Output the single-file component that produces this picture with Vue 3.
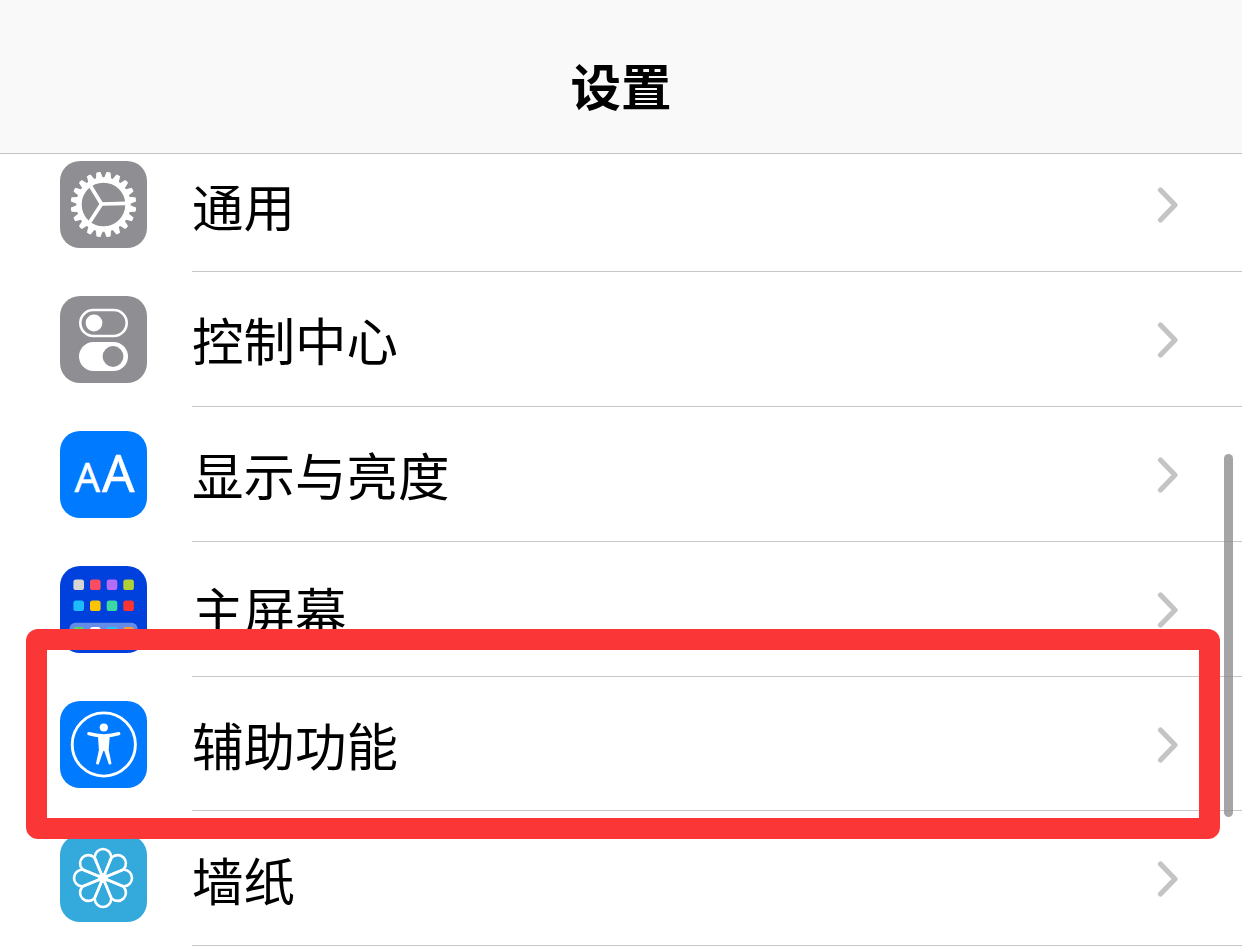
<template>
  <div class="page">
    <header class="nav-bar">
      <h1 class="nav-title">设置</h1>
    </header>

    <div class="list-wrap">
      <ul class="list">
        <li v-for="item in items" :key="item.label" class="row">
          <div class="app-icon" :class="item.icon">
            <svg v-if="item.icon === 'general'" viewBox="0 0 87 87" width="87" height="87">
              <g fill="#fff">
                <path v-for="a in teeth" :key="a" d="M41.4 10.9 Q43.5 10.3 45.6 10.9 L47.8 21 H39.2 Z" :transform="`rotate(${a} 43.5 43.5)`" />
              </g>
              <circle cx="43.5" cy="43.5" r="24.5" fill="none" stroke="#fff" stroke-width="5.4" />
              <g stroke="#fff" stroke-width="3.7" stroke-linecap="round">
                <line x1="41.5" y1="43" x2="30.5" y2="25" />
                <line x1="41.5" y1="43" x2="66" y2="42.4" />
                <line x1="41.5" y1="43" x2="30.5" y2="60" />
              </g>
            </svg>

            <svg v-else-if="item.icon === 'control'" viewBox="0 0 87 87" width="87" height="87">
              <rect x="20.3" y="14" width="46.4" height="26" rx="13" fill="none" stroke="#fff" stroke-width="2.6" />
              <circle cx="34" cy="27" r="8.4" fill="#fff" />
              <rect x="19" y="46" width="49" height="29" rx="14.5" fill="#fff" />
              <circle cx="53" cy="60.5" r="10.4" fill="#8e8e93" />
            </svg>

            <svg v-else-if="item.icon === 'display'" viewBox="0 0 87 87" width="87" height="87">
              <text x="14.5" y="61" class="aa small">A</text>
              <text x="42" y="61" class="aa big">A</text>
            </svg>

            <svg v-else-if="item.icon === 'home'" viewBox="0 0 87 87" width="87" height="87">
              <rect v-for="d in homeDots" :key="d.x + '-' + d.y" :x="d.x" :y="d.y" width="10.6" height="10.6" rx="2.6" :fill="d.c" />
              <rect x="9.4" y="56.7" width="68.2" height="22" rx="6" fill="#fff" fill-opacity="0.4" />
              <rect v-for="d in dockDots" :key="d.x" :x="d.x" y="61" width="10.6" height="10.6" rx="2.6" :fill="d.c" />
            </svg>

            <svg v-else-if="item.icon === 'access'" viewBox="0 0 87 87" width="87" height="87">
              <circle cx="43.8" cy="43.5" r="31.6" fill="none" stroke="#fff" stroke-width="2.9" />
              <circle cx="43.8" cy="26.5" r="4.1" fill="#fff" />
              <path d="M28.8 32.6 Q43.8 37 58.8 32.6" fill="none" stroke="#fff" stroke-width="3.2" stroke-linecap="round" />
              <path d="M38 35.5 H49.7 L48.7 49 L51.5 62.5 Q50.5 64 48.8 63.2 L44.3 50 H43.3 L38.8 63.2 Q37 64 36 62.5 L38.9 49 Z" fill="#fff" />
            </svg>

            <svg v-else viewBox="0 0 87 87" width="87" height="87">
              <g fill="none" stroke="#fff" stroke-width="2.6" stroke-linejoin="round">
                <path v-for="a in petals" :key="a" d="M0 0 L-6.5 -15.7 A8.24 8.24 0 1 1 6.5 -15.7 Z" :transform="`translate(43 43) rotate(${a})`" />
              </g>
              <circle cx="43" cy="43" r="4.8" fill="#fff" />
            </svg>
          </div>

          <div class="row-body">
            <span class="row-label">{{ item.label }}</span>
            <svg class="chevron" viewBox="0 0 24 36" width="24" height="36">
              <path d="M3.5 3 L18 18 L3.5 33" fill="none" stroke="#c4c4c7" stroke-width="5.2" stroke-linecap="round" stroke-linejoin="round" />
            </svg>
          </div>
        </li>
      </ul>
    </div>

    <div class="scrollbar"></div>
    <div class="highlight"></div>
  </div>
</template>

<script setup>
const items = [
  { label: '通用', icon: 'general' },
  { label: '控制中心', icon: 'control' },
  { label: '显示与亮度', icon: 'display' },
  { label: '主屏幕', icon: 'home' },
  { label: '辅助功能', icon: 'access' },
  { label: '墙纸', icon: 'wallpaper' }
]

const teeth = Array.from({ length: 20 }, (_, i) => i * 18 + 9)
const petals = Array.from({ length: 8 }, (_, i) => i * 45)

const cols = [13.4, 30, 46.7, 63.3]
const rowOne = ['#d8d6d2', '#fb4c62', '#b56cf8', '#afd136']
const rowTwo = ['#1dbcfb', '#fdc500', '#3bd8a4', '#fc3532']
const dock = ['#4fd964', '#ffffff', '#1fc8f5', '#f79a3c']

const homeDots = [
  ...cols.map((x, i) => ({ x, y: 13.4, c: rowOne[i] })),
  ...cols.map((x, i) => ({ x, y: 34.4, c: rowTwo[i] }))
]
const dockDots = cols.map((x, i) => ({ x, c: dock[i] }))
</script>

<style>
html, body {
  margin: 0;
  background: #fff;
}
</style>

<style scoped>
.page {
  position: relative;
  width: 1242px;
  height: 948px;
  overflow: hidden;
  display: flex;
  flex-direction: column;
  background: #fff;
  font-family: "Noto Sans CJK SC", "Liberation Sans", sans-serif;
  color: #000;
}

.nav-bar {
  height: 153px;
  flex-shrink: 0;
  display: flex;
  align-items: center;
  justify-content: center;
  background: #f9f9fa;
  border-bottom: 1px solid #c4c4c6;
}

.nav-title {
  margin: 0;
  font-size: 50.5px;
  font-weight: 700;
  line-height: 1;
  position: relative;
  top: 8px;
}

.list-wrap {
  flex: 1;
  overflow: hidden;
}

.list {
  margin: -16.5px 0 0;
  padding: 0;
  list-style: none;
}

.row {
  height: 134.8px;
  display: flex;
  align-items: center;
  padding-left: 60px;
}

.app-icon {
  width: 87px;
  height: 87px;
  flex-shrink: 0;
  border-radius: 20px;
  overflow: hidden;
}

.app-icon svg {
  display: block;
}

.general,
.control {
  background: #8e8e93;
}

.display,
.access {
  background: #007aff;
}

.home {
  background: #0040dd;
}

.wallpaper {
  background: #34aadc;
}

.aa {
  fill: #fff;
  stroke: #fff;
  stroke-width: 0.5;
  stroke-linejoin: round;
  font-family: "Noto Sans", sans-serif;
}

.small {
  font-size: 40px;
}

.big {
  font-size: 51px;
}

.row-body {
  flex: 1;
  align-self: stretch;
  margin-left: 45px;
  padding-right: 61px;
  display: flex;
  align-items: center;
  justify-content: space-between;
  border-bottom: 1px solid #c8c8ca;
}

.row-label {
  font-size: 51.5px;
  line-height: 1;
}

.chevron {
  display: block;
  position: relative;
  top: 1px;
}

.scrollbar {
  position: absolute;
  left: 1224px;
  top: 454px;
  width: 9px;
  height: 363px;
  border-radius: 5px;
  background: rgba(140, 140, 140, 0.78);
}

.highlight {
  position: absolute;
  left: 26px;
  top: 629px;
  width: 1152px;
  height: 168px;
  border: 21px solid #fa3636;
  border-radius: 12px;
}
</style>
